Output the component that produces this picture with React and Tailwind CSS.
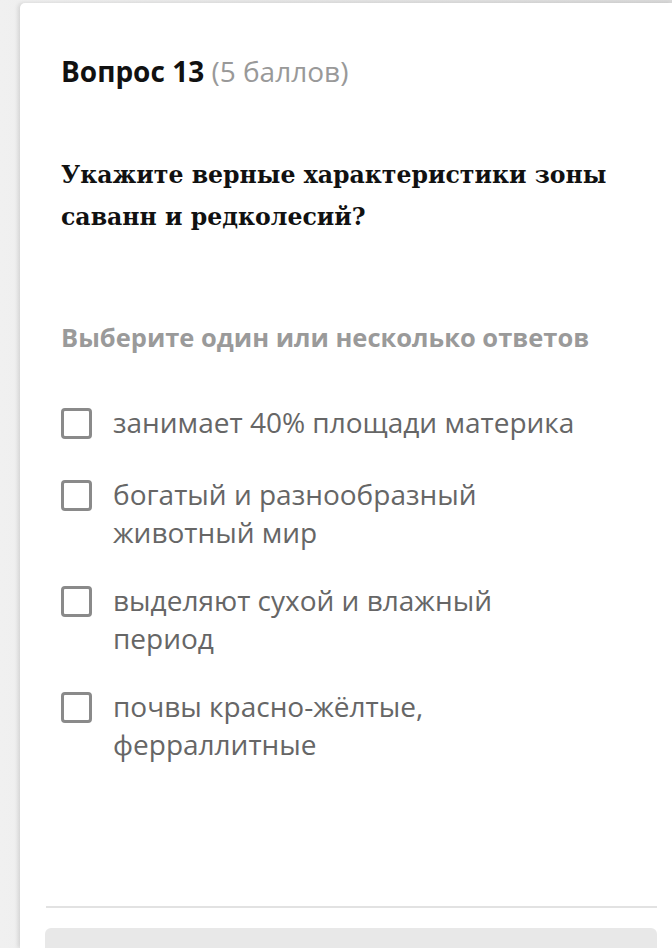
export default function App() {
  const options = [
    "занимает 40% площади материка",
    "богатый и разнообразный животный мир",
    "выделяют сухой и влажный период",
    "почвы красно-жёлтые, ферраллитные",
  ];
  return (
    <div className="w-[672px] h-[948px] overflow-hidden pt-[3px] pl-[20px] bg-gradient-to-r from-[#f0f0f0] to-[#dadada]">
      <div className="bg-white h-full rounded-tl-[5px] shadow-[-2px_0_4px_rgba(0,0,0,0.12)] pl-[41px] pr-[15px] pt-[50px]" style={{ fontFamily: '"Open Sans", sans-serif' }}>
        <div className="text-[28px] leading-[36px]">
          <span className="font-bold text-[#111]">Вопрос 13</span>
          <span className="text-[#999]"> (5 баллов)</span>
        </div>
        <div className="mt-[65px] text-[23.6px] leading-[42px] font-bold text-[#111] w-[560px]" style={{ fontFamily: '"DejaVu Serif", serif' }}>
          Укажите верные характеристики зоны саванн и редколесий?
        </div>
        <div className="mt-[82px] text-[25.5px] leading-[34px] font-bold text-[#9a9a9a]">
          Выберите один или несколько ответов
        </div>
        <div className="mt-[49px] flex flex-col gap-[30px]">
          {options.map((o, i) => (
            <div key={o} className={i === 0 ? "flex items-start mb-[4px]" : "flex items-start"}>
              <div className="w-[31px] h-[31px] mt-[5px] border-[3px] border-[#8a8a8a] rounded-[4px] shrink-0" />
              <div className="ml-[21px] text-[28px] leading-[38px] text-[#666] w-[480px]">{o}</div>
            </div>
          ))}
        </div>
        <div className="mt-[143px] ml-[-15px] h-[2px] bg-[#e2e2e2]" />
        <div className="mt-[20px] ml-[-16px] h-[40px] rounded-[6px] bg-[#e8e8e8]" />
      </div>
    </div>
  );
}
